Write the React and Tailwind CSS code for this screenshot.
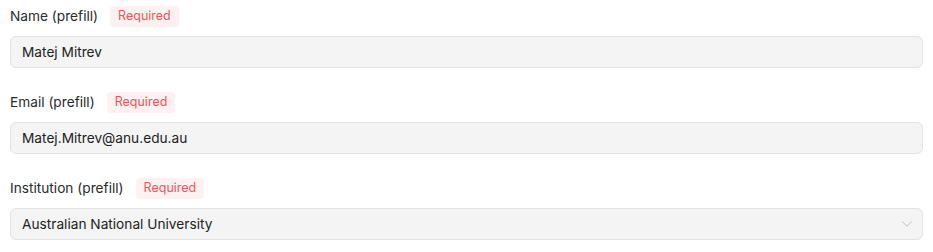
import React from 'react';
import { ChevronDown } from 'lucide-react';

const Field = ({ label, value, select }) => (
    <div className="flex flex-col gap-[9px]">
        <div className="flex items-center gap-[12px] h-[21px]">
            <span className="text-[13.7px] text-[#2a2a2a]">{label}</span>
            <span className="px-[8px] h-[21px] flex items-center rounded-[4px] bg-[#fef1f1] text-[12.5px] text-[#f0555a]">Required</span>
        </div>
        <div className="h-[32px] flex items-center justify-between rounded-[6px] border border-[#e2e2e2] bg-[#f4f4f4] pl-[11px] pr-[6px]">
            <span className="text-[13.7px] text-[#222]">{value}</span>
            {select && <ChevronDown size={18} strokeWidth={1.1} className="text-[#b5b5b5]" />}
        </div>
    </div>
);

export default function App() {
    return (
        <div className="w-[933px] h-[252px] bg-white px-[10px] pt-[6px] flex flex-col gap-[24px]" style={{ fontFamily: 'Inter, "Noto Sans", sans-serif' }}>
            <Field label="Name (prefill)" value="Matej Mitrev" />
            <Field label="Email (prefill)" value="Matej.Mitrev@anu.edu.au" />
            <Field label="Institution (prefill)" value="Australian National University" select />
        </div>
    );
}
